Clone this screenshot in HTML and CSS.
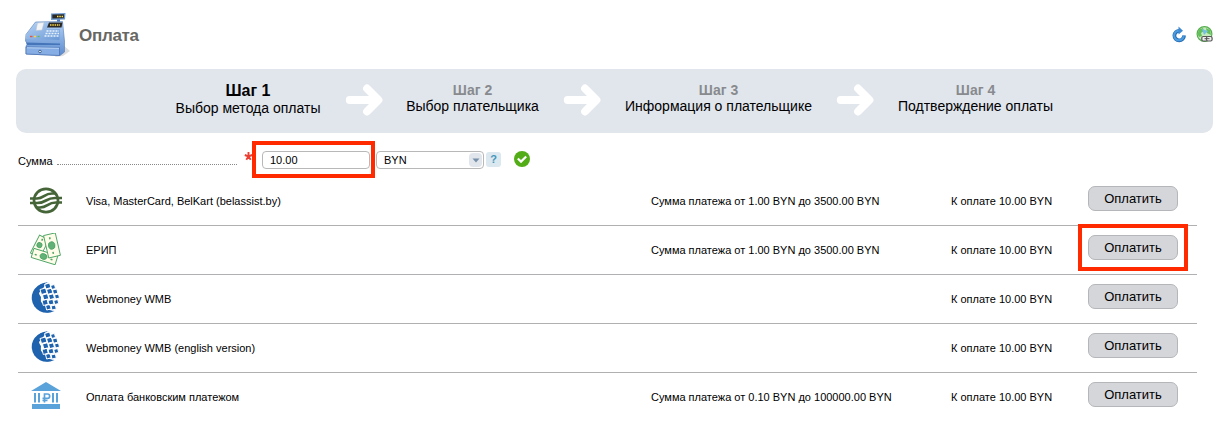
FILE: index.html
```html
<!DOCTYPE html>
<html lang="ru">
<head>
<meta charset="utf-8">
<title>Оплата</title>
<link rel="stylesheet" href="styles.css">
</head>
<body>
<svg class="defs" width="0" height="0" aria-hidden="true">
  <defs>
    <symbol id="arrow" viewBox="0 0 38 32"><path d="M4.700 16H32M22 4.500L33.500 16L22 27.500" fill="none" stroke="#fff" stroke-width="7.800" stroke-linecap="round" stroke-linejoin="round"/></symbol>
    <symbol id="webmoney" viewBox="0 0 32 32">
      <path d="M22 1.800A15 15 0 1 0 24.500 28.700L31 21L29 9Z" fill="#1f62ae"/>
      <path d="M16 0L26 2L32 10V22L24 30.500L16 26L11 20L9 11L14 5Z" fill="#fff"/>
      <path d="M16 0L14.500 3L10 6L8 11L11 15L10.500 20L15 23L18 28L24.500 29A15 15 0 1 1 18 .500Z" fill="#1f62ae"/>
      <g fill="#1f62ae" stroke="#fff" stroke-width="1">
        <path d="M14.500 2.500l5-1.500 1.500 4.500-5 1.500zM20.500 3.500l4-1 1 4-4 1zM10 7.500l5.500-1.500 1.500 5-5.500 1.500zM16.500 7.500l5-1.300 1.300 4.800-5 1.300zM22.500 8l4.300-1 1 4.200-4.300 1zM12.500 13l5-1.300 1.300 5-5 1.300zM18.500 13l4.800-1.200 1.200 4.600-4.800 1.200zM24.500 13l4-1 1 4-4 1zM12 18.500l5-1.300 1.300 5-5 1.300zM18 18.500l4.800-1.200 1.200 4.600-4.800 1.200zM23.700 18.500l4-1 1 4-4 1zM15.500 23.500l4.500-1.200 1.200 4.500-4.500 1.200zM21 24l4.300-1 1 4-4.300 1z"/>
      </g>
    </symbol>
  </defs>
</svg>
<header class="header">
  <svg class="register" viewBox="0 0 46 46" width="46" height="46">
    <defs>
      <linearGradient id="blue" x1="0" y1="0" x2="1" y2="1"><stop offset="0" stop-color="#b5d2f3"/><stop offset="1" stop-color="#6a98d5"/></linearGradient>
      <linearGradient id="side" x1="0" y1="0" x2="0" y2="1"><stop offset="0" stop-color="#b4d2f5"/><stop offset="1" stop-color="#5c8bce"/></linearGradient>
    </defs>
    <path d="M38 33L45 39L38 44L30 45Z" fill="#ddd"/>
    <path d="M32 7h3v5h-3z" fill="#4d79b8"/>
    <path d="M26 1.500L40.500 1L40 7.500L26 8Z" fill="#6e9bd3"/>
    <path d="M27.300 2.500L39 2.200L38.700 6.200L27.300 6.600Z" fill="#282828"/>
    <path d="M32 4.500h6" stroke="#ffe04a" stroke-width="1.500" stroke-dasharray="1.500 .8"/>
    <path d="M10.500 10L37.500 9.500L39.500 29V40L35 43.500L1 42V34L2.500 32L.5 29L1 22.500Z" fill="url(#side)" stroke="#507ab5" stroke-width=".6"/>
    <path d="M10 12L24 11L22 17L35 17L34.500 28L1 27V22.500Z" fill="url(#blue)"/>
    <path d="M12.500 11L19 10.500L17 18L11 18.500Z" fill="#f4f5f6" stroke="#bdc5cf" stroke-width=".5"/>
    <path d="M24 10.500H37.500L36.500 15.500H22Z" fill="#292929"/>
    <path d="M25 13h10" stroke="#fbd74a" stroke-width="1.400" stroke-dasharray="1.500 .8"/>
    <path d="M21.500 19H34M20.500 21.500H34M19.500 24H34" stroke="#e8f3ff" stroke-width="1.500" stroke-dasharray="2 1"/>
    <path d="M5 24.500h2.500" stroke="#e45243" stroke-width="1.400"/><path d="M9 24.500h2" stroke="#ffd543" stroke-width="1.400"/><path d="M12.500 24.500h2" stroke="#62ba52" stroke-width="1.400"/>
    <path d="M1 30.500L35 31.500V33L2 33Z" fill="#4676b9"/>
    <path d="M1 35L34.500 35.500V43.500L1 42Z" fill="#86aee4" stroke="#476fae" stroke-width=".7"/>
    <path d="M2 35.800L34 36.300" stroke="#bad4f5"/><circle cx="15" cy="39.500" r="1.300" fill="#e7f2ff" stroke="#294c7c" stroke-width=".8"/>
  </svg>
  <h1 class="title">Оплата</h1>
  <div class="tools">
    <svg viewBox="0 0 16 18" width="16" height="18"><path d="M8.500 4.800A4.800 4.800 0 1 0 13 9.500" fill="none" stroke="#286db2" stroke-width="3.800"/><path d="M8.500 4.800A4.800 4.800 0 1 0 12.700 9.500" fill="none" stroke="#4a9be0" stroke-width="2"/><path d="M7.500.5L12 4.800L7.500 8.500Z" fill="#3d89d2"/></svg>
    <svg viewBox="0 0 17 17" width="17" height="17"><circle cx="8.500" cy="8" r="7.400" fill="#c5e9bd" stroke="#57ae50" stroke-width="1.200"/><path d="M3 3.500L7 2L8 5L5 7L6 10L3 11L1.500 8ZM10 2L14 4L15 9L11 7Z" fill="#63bf59"/><path d="M6 3L12 5L8 9Z" fill="#74bde3"/><rect x="5.800" y="10.500" width="6" height="4.500" rx="1.500" fill="#eee" stroke="#555" stroke-width="1.200"/><rect x="10.500" y="10.500" width="5.600" height="4.500" rx="1.500" fill="#eee" stroke="#555" stroke-width="1.200"/><path d="M8.500 12.700h5" stroke="#555"/></svg>
  </div>
</header>
<main>
  <div class="steps">
    <div class="step current s1"><b>Шаг 1</b><span>Выбор метода оплаты</span></div>
    <svg class="arrow first"><use href="#arrow"/></svg>
    <div class="step s2"><b>Шаг 2</b><span>Выбор плательщика</span></div>
    <svg class="arrow"><use href="#arrow"/></svg>
    <div class="step s3"><b>Шаг 3</b><span>Информация о плательщике</span></div>
    <svg class="arrow"><use href="#arrow"/></svg>
    <div class="step s4"><b>Шаг 4</b><span>Подтверждение оплаты</span></div>
  </div>
  <div class="amount">
    <label class="label" for="sum">Сумма</label><span class="dots"></span>
    <svg class="required" viewBox="0 0 9 11" width="9" height="11"><path d="M4.500 1V5.500M.8 4L4.500 5.500L8.200 4M2.300 8.700L4.500 5.500L6.700 8.700" fill="none" stroke="#ec3f33" stroke-width="1.900"/></svg>
    <div class="field"><input id="sum" class="input" value="10.00"></div>
    <div class="select"><span>BYN</span><i class="drop"><svg viewBox="0 0 8 5" width="8" height="5"><path d="M.5 .5H7.500L4 4.500Z" fill="#7790aa"/></svg></i></div>
    <span class="help">?</span>
    <svg class="ok" viewBox="0 0 16 16" width="16" height="16"><circle cx="8" cy="8" r="8" fill="#53ad17"/><path d="M3.800 7.500L7 10.600L12.200 5.500" fill="none" stroke="#fff" stroke-width="2.200"/></svg>
  </div>
  <div class="methods">
    <div class="method">
      <svg class="icon" viewBox="0 0 32 32"><g fill="none" stroke="#456538" stroke-width="2.700"><ellipse cx="16" cy="16.500" rx="12" ry="11.600"/><path d="M0 14.500H7C14 14.500 14 9.500 22 9.500H26M0 19H7C17 19 15 14 25 14H32M6 23.500H10C18 23.500 17 18.500 26 18.500H32"/></g></svg>
      <span class="name">Visa, MasterCard, BelKart (belassist.by)</span><span class="limits">Сумма платежа от 1.00 BYN до 3500.00 BYN</span><span class="due">К оплате 10.00 BYN</span><button class="pay">Оплатить</button>
    </div>
    <div class="method">
      <svg class="icon" viewBox="0 0 32 32"><g fill="#fffde9" stroke="#4da466" stroke-width=".9"><g transform="rotate(27 9 13)"><rect x="4.500" y="3" width="10.500" height="20"/><circle cx="9" cy="12" r="2.500" fill="#62b277"/><path d="M9 5v2M9 18v2" stroke-width="1.500"/></g><g transform="rotate(17 13.500 23.500)"><rect x="2" y="18.500" width="25" height="9.500"/><ellipse cx="13.500" cy="23.500" rx="3.500" ry="2.800" fill="#62b277"/><path d="M4.500 24h2M21 24h2" stroke-width="1.500"/></g><g transform="rotate(-13 21.700 12.500)"><rect x="16" y="1" width="12" height="23"/><ellipse cx="21.700" cy="12.500" rx="3.200" ry="3.700" fill="#62b277"/><path d="M21.500 4v2M21.500 19v2" stroke-width="1.500"/></g></g></svg>
      <span class="name">ЕРИП</span><span class="limits">Сумма платежа от 1.00 BYN до 3500.00 BYN</span><span class="due">К оплате 10.00 BYN</span><span class="action"><button class="pay">Оплатить</button></span>
    </div>
    <div class="method"><svg class="icon"><use href="#webmoney"/></svg><span class="name">Webmoney WMB</span><span class="limits"></span><span class="due">К оплате 10.00 BYN</span><button class="pay">Оплатить</button></div>
    <div class="method"><svg class="icon"><use href="#webmoney"/></svg><span class="name">Webmoney WMB (english version)</span><span class="limits"></span><span class="due">К оплате 10.00 BYN</span><button class="pay">Оплатить</button></div>
    <div class="method">
      <svg class="icon" viewBox="0 0 32 32"><g fill="#5aa2da"><path d="M16 2L31 11H1ZM2 24H30V29H2ZM4 13H6V22.500H4ZM8 13H10V22.500H8ZM22 13H24V22.500H22ZM26 13H28V22.500H26Z"/></g><path d="M14.500 22.500V14H17.500A2 2 0 0 1 17.500 18.300H12.500M12.500 20.500H17.500" fill="none" stroke="#5aa2da" stroke-width="1.700"/></svg>
      <span class="name">Оплата банковским платежом</span><span class="limits">Сумма платежа от 0.10 BYN до 100000.00 BYN</span><span class="due">К оплате 10.00 BYN</span><button class="pay">Оплатить</button>
    </div>
  </div>
</main>
</body>
</html>
```
FILE: styles.css
```css
*, *::after { box-sizing: border-box; }
body { margin: 0; background: #fff; color: #000; font: 11px/14px "Liberation Sans", Arial, sans-serif; height: 433px; overflow: hidden; }
.defs { display: block; position: absolute; }
.header { height: 69px; display: flex; align-items: flex-start; padding: 12px 8px 0 25px; }
.title { margin: 14px 0 0 8px; font-size: 17px; line-height: 20px; letter-spacing: -.3px; color: #676763; }
.tools { margin: 14px 0 0 auto; display: flex; gap: 9px; }
.steps { height: 64px; margin: 0 8px 0 16px; padding: 12px 0 0 160px; display: flex; align-items: flex-start; border-radius: 10px; background: #e1e5ec; }
.step { display: flex; flex-direction: column; align-items: center; white-space: nowrap; font-size: 14px; line-height: 16px; }
.step b { height: 17px; line-height: 18px; color: #888a8e; }
.step.current b { color: #000; font-size: 16px; line-height: 19px; }
.step.current span { padding-top: 2px; }
.s1 { width: 144px; } .s2 { width: 133px; } .s3 { width: 187px; } .s4 { width: 155px; }
.arrow { width: 38px; height: 32px; margin: 3px 24px 0; flex: none; }
.arrow.first { margin: 3px 23px 0 25px; }
.amount { height: 54px; padding: 8px 0 0 18px; display: flex; align-items: flex-start; }
.label { width: 35px; margin: 13px 4px 0 0; }
.dots { width: 180px; margin-top: 23px; border-top: 1px dotted #888; }
.required { margin: 10px 0 0 7px; }
.field { width: 123px; height: 37px; margin-left: -1px; padding: 6px; border: 4px solid #ff2a00; }
.input { display: block; width: 108px; height: 18px; padding: 0 7px; border: 1px solid #b8b8b8; border-radius: 4px; outline: 0; font: 11px "Liberation Sans", Arial, sans-serif; }
.select { width: 108px; height: 18px; margin: 10px 0 0 1px; padding: 0 1px 0 7px; border: 1px solid #b8b8b8; border-radius: 4px; display: flex; align-items: center; justify-content: space-between; }
.drop { width: 13px; height: 14px; border-radius: 4px; background: #e1e5ec; display: grid; place-items: center; }
.help { width: 15px; height: 15px; margin: 11px 0 0 2px; border-radius: 3px; background: #dce8ef; color: #4596bc; font-weight: bold; line-height: 15px; text-align: center; }
.ok { margin: 10px 0 0 13px; }
.methods { margin: -10px 24px 0 18px; }
.method { height: 49px; display: grid; grid-template-columns: 56px 565px 300px 137px 90px; padding-left: 12px; border-bottom: 1px solid #b0b0b2; white-space: nowrap; align-items: start; }
.method:last-child { border-bottom: 0; }
.icon { width: 32px; height: 32px; margin-top: 7px; }
.name, .limits, .due { padding-top: 17px; }
.pay { display: block; width: 90px; height: 25px; margin: 9px 0 0; padding: 0 0 1px; border: 1px solid #b5b6ba; border-radius: 7px; background: #d5d6da; color: #000; font: 13px "Liberation Sans", Arial, sans-serif; }
.action { position: relative; height: 48px; }
.action::after { content: ""; position: absolute; left: -10px; top: -2px; width: 110px; height: 47px; border: 4px solid #ff2a00; pointer-events: none; }
```
